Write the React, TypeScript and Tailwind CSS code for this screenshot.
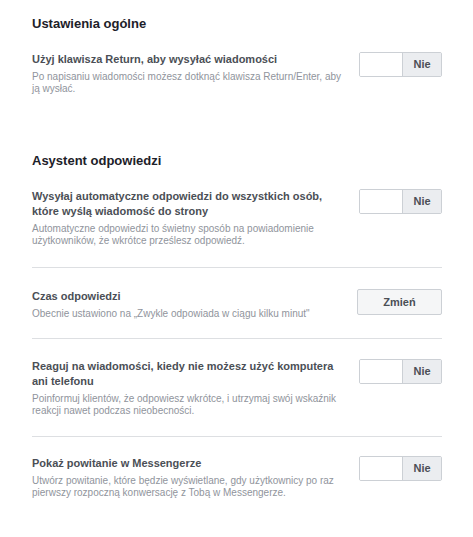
import { useState } from 'react'

type Row = {
  title: string
  desc: string
  kind: 'toggle' | 'button'
  pad: string
}

const ASSISTANT_ROWS: Row[] = [
  {
    title: 'Wysyłaj automatyczne odpowiedzi do wszystkich osób, które wyślą wiadomość do strony',
    desc: 'Automatyczne odpowiedzi to świetny sposób na powiadomienie użytkowników, że wkrótce prześlesz odpowiedź.',
    kind: 'toggle',
    pad: 'pb-[20px]',
  },
  {
    title: 'Czas odpowiedzi',
    desc: 'Obecnie ustawiono na „Zwykle odpowiada w ciągu kilku minut"',
    kind: 'button',
    pad: 'pt-[21px] pb-[18px]',
  },
  {
    title: 'Reaguj na wiadomości, kiedy nie możesz użyć komputera ani telefonu',
    desc: 'Poinformuj klientów, że odpowiesz wkrótce, i utrzymaj swój wskaźnik reakcji nawet podczas nieobecności.',
    kind: 'toggle',
    pad: 'pt-[20px] pb-[19px]',
  },
  {
    title: 'Pokaż powitanie w Messengerze',
    desc: 'Utwórz powitanie, które będzie wyświetlane, gdy użytkownicy po raz pierwszy rozpoczną konwersację z Tobą w Messengerze.',
    kind: 'toggle',
    pad: 'pt-[19px] pb-[19px]',
  },
]

function Toggle() {
  const [on, setOn] = useState(false)
  return (
    <button
      onClick={() => setOn(!on)}
      className="flex h-[25px] w-[83px] shrink-0 overflow-hidden rounded-[2px] border border-[#ccd0d5] text-[11px] font-bold"
    >
      <span className={'w-[42px] h-full ' + (on ? 'bg-[#4267b2]' : 'bg-white')} />
      <span className="flex h-full flex-1 items-center justify-center border-l border-[#ccd0d5] bg-[#ebedf0] text-[#4b4f56]">
        {on ? 'Tak' : 'Nie'}
      </span>
    </button>
  )
}

function SettingRow({ row }: { row: Omit<Row, 'pad'> }) {
  return (
    <div className="flex items-start justify-between">
      <div className="w-[310px]">
        <div className="text-[11px] font-bold leading-[15px] text-[#4b4f56]">{row.title}</div>
        <div className="mt-[4px] text-[10px] leading-[12px] text-[#90949c]">{row.desc}</div>
      </div>
      {row.kind === 'toggle' ? (
        <Toggle />
      ) : (
        <button className="h-[26px] w-[85px] shrink-0 rounded-[2px] border border-[#ccd0d5] bg-[#f5f6f7] text-[11px] font-bold text-[#4b4f56]">
          Zmień
        </button>
      )}
    </div>
  )
}

export default function App() {
  return (
    <div
      className="min-h-[537px] w-[473px] bg-white pl-8 pr-[31px] pt-[15px]"
      style={{ fontFamily: '"Liberation Sans", Arial, sans-serif' }}
    >
      {/* Ustawienia ogólne */}
      <h2 className="text-[13px] font-bold leading-[18px] text-[#1d2129]">Ustawienia ogólne</h2>
      <div className="pt-[19px]">
        <SettingRow
          row={{
            title: 'Użyj klawisza Return, aby wysyłać wiadomości',
            desc: 'Po napisaniu wiadomości możesz dotknąć klawisza Return/Enter, aby ją wysłać.',
            kind: 'toggle',
          }}
        />
      </div>

      {/* Asystent odpowiedzi */}
      <h2 className="mt-[57px] text-[13px] font-bold leading-[18px] text-[#1d2129]">Asystent odpowiedzi</h2>
      <div className="mt-[19px] divide-y divide-[#dddfe2]">
        {ASSISTANT_ROWS.map((row) => (
          <div key={row.title} className={row.pad}>
            <SettingRow row={row} />
          </div>
        ))}
      </div>
    </div>
  )
}
